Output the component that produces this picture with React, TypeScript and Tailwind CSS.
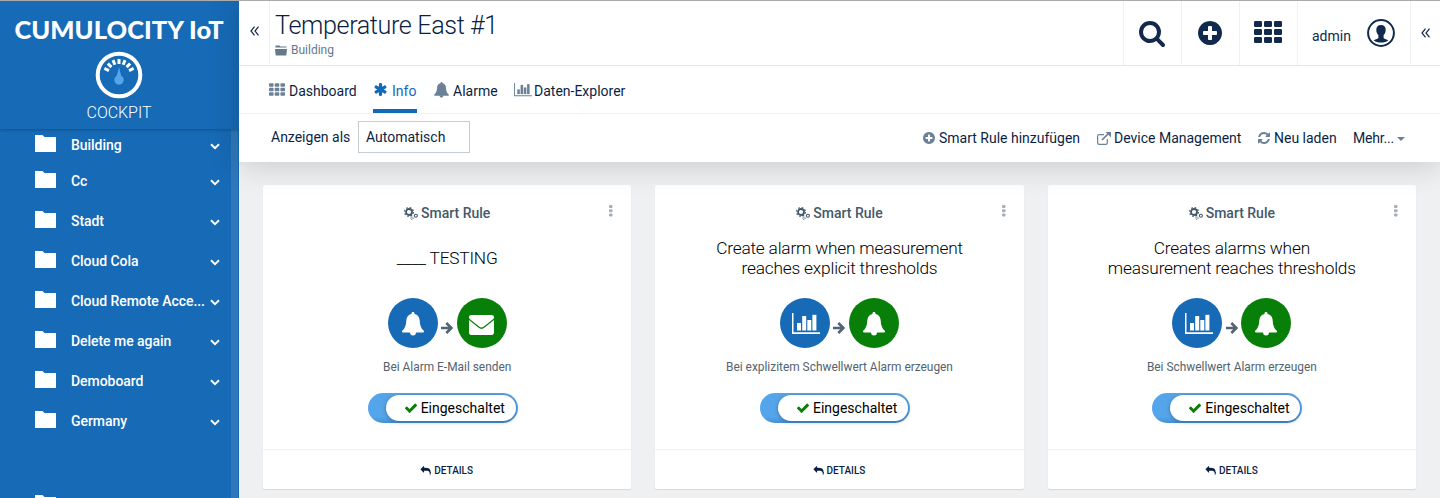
import React from "react";

const PATHS = {
  search: "M1216 832q0-185-131.5-316.5t-316.5-131.5-316.5 131.5-131.5 316.5 131.5 316.5 316.5 131.5 316.5-131.5 131.5-316.5zm512 832q0 52-38 90t-90 38q-54 0-90-38l-343-342q-179 124-399 124-143 0-273.5-55.5t-225-150-150-225-55.5-273.5 55.5-273.5 150-225 225-150 273.5-55.5 273.5 55.5 225 150 150 225 55.5 273.5q0 220-124 399l343 343q37 37 37 90z",
  plus: "M1344 960v-128q0-26-19-45t-45-19h-256v-256q0-26-19-45t-45-19h-128q-26 0-45 19t-19 45v256h-256q-26 0-45 19t-19 45v128q0 26 19 45t45 19h256v256q0 26 19 45t45 19h128q26 0 45-19t19-45v-256h256q26 0 45-19t19-45zm320-64q0 209-103 385.5t-279.5 279.5-385.5 103-385.5-103-279.5-279.5-103-385.5 103-385.5 279.5-279.5 385.5-103 385.5 103 279.5 279.5 103 385.5z",
  asterisk: "M1546 1050q46 26 59.5 77.5t-12.5 97.5l-64 110q-26 46-77.5 59.5t-97.5-12.5l-266-153v307q0 52-38 90t-90 38h-128q-52 0-90-38t-38-90v-307l-266 153q-46 26-97.5 12.5t-77.5-59.5l-64-110q-26-46-12.5-97.5t59.5-77.5l266-154-266-154q-46-26-59.5-77.5t12.5-97.5l64-110q26-46 77.5-59.5t97.5 12.5l266 153v-307q0-52 38-90t90-38h128q52 0 90 38t38 90v307l266-153q46-26 97.5-12.5t77.5 59.5l64 110q26 46 12.5 97.5t-59.5 77.5l-266 154z",
  check: "M1671 566q0 40-28 68l-724 724-136 136q-28 28-68 28t-68-28l-136-136-362-362q-28-28-28-68t28-68l136-136q28-28 68-28t68 28l294 295 656-657q28-28 68-28t68 28l136 136q28 28 28 68z",
  reply: "M1792 1120q0 166-127 451-3 7-10.5 24t-13.5 30-13 22q-12 17-28 17-15 0-23.5-10t-8.5-25q0-9 2.5-26.5t2.5-23.5q5-68 5-123 0-112-19.5-200.5t-54-153.5-89-112-117.5-78-149-43.5-171.5-18.5-200.5-5.5h-224v256q0 26-19 45t-45 19-45-19l-512-512q-19-19-19-45t19-45l512-512q19-19 45-19t45 19 19 45v256h224q713 0 875 403 53 134 53 333z",
  refresh: "M1639 1056q0 5-1 7-64 268-268 434.5t-478 166.5q-146 0-282.5-55t-243.5-157l-129 129q-19 19-45 19t-45-19-19-45v-448q0-26 19-45t45-19h448q26 0 45 19t19 45-19 45l-137 137q71 66 161 102t187 36q134 0 250-65t186-179q11-17 53-117 8-23 30-23h192q13 0 22.5 9.5t9.5 22.5zm25-800v448q0 26-19 45t-45 19h-448q-26 0-45-19t-19-45 19-45l138-138q-148-137-349-137-134 0-250 65t-186 179q-11 17-53 117-8 23-30 23h-199q-13 0-22.5-9.5t-9.5-22.5v-7q65-268 270-434.5t480-166.5q146 0 284 55.5t245 156.5l130-129q19-19 45-19t45 19 19 45z",
};

function Glyph({ name, className }: { name: keyof typeof PATHS; className: string }) {
  return (
    <svg viewBox="0 0 1792 1792" className={`shrink-0 overflow-visible ${className}`} fill="currentColor">
      <path d={PATHS[name]} />
    </svg>
  );
}

function Grid({ className }: { className: string }) {
  return (
    <svg viewBox="0 0 28 22" className={`shrink-0 ${className}`} fill="currentColor">
      {[0, 8, 16].map((y) =>
        [0, 10, 20].map((x) => <rect key={`${x}-${y}`} x={x} y={y} width="8" height="6" rx="1.2" />),
      )}
    </svg>
  );
}

function Bell({ className }: { className: string }) {
  return (
    <svg viewBox="0 0 22 24" className={`shrink-0 ${className}`} fill="currentColor">
      <path d="M11 0c.9 0 1.500.6 1.500 1.400v.5c3.300.7 5 3.300 5.200 6.600.3 5 1.300 7.900 4.100 10.300.5.500.2 1.700-.6 1.700H.8c-.8 0-1.100-1.200-.6-1.700C3 16.400 4 13.500 4.300 8.500c.2-3.300 1.900-5.900 5.200-6.600v-.5C9.500.6 10.100 0 11 0z" />
      <path d="M8 20h6a3 3.500 0 0 1-6 0z" />
    </svg>
  );
}

function BarChart({ className }: { className: string }) {
  return (
    <svg viewBox="0 0 28 22" className={`shrink-0 ${className}`} fill="currentColor">
      <path d="M0 0h1.500v19.300H28V21H0z" />
      <rect x="5" y="10" width="4" height="7.500" />
      <rect x="10.200" y="3" width="4" height="14.500" />
      <rect x="15.300" y="7" width="4" height="10.500" />
      <rect x="20.400" y="1.800" width="4" height="15.700" />
    </svg>
  );
}

function Envelope({ className }: { className: string }) {
  return (
    <svg viewBox="0 0 25 20" className={`shrink-0 ${className}`} fill="currentColor">
      <path d="M2.500 0h20C24 0 25 .9 25 2.200c0 .9-.5 1.600-1.300 2.200l-8.800 7c-1.700 1.300-3.100 1.300-4.800 0l-8.800-7C.5 3.800 0 3.100 0 2.200 0 .9 1 0 2.500 0z" />
      <path d="M0 5l9.300 7.600c2.300 1.700 4.100 1.700 6.400 0L25 5v12.800c0 1.200-1 2.200-2.200 2.200H2.200C1 20 0 19 0 17.800z" />
    </svg>
  );
}

function Folder({ className }: { className: string }) {
  return (
    <svg viewBox="0 0 21 17" className={`shrink-0 ${className}`} fill="currentColor">
      <path d="M0 0h7.500L9.500 2H21V17H0z" />
    </svg>
  );
}

function Cogs() {
  return (
    <svg viewBox="0 0 14 13" className="h-[13px] w-[14px] shrink-0" fill="none" stroke="currentColor">
      <circle cx="5" cy="5" r="3" strokeWidth="1.800" />
      <circle cx="5" cy="5" r="4.400" strokeWidth="1.200" strokeDasharray="1.730 1.730" />
      <circle cx="11.900" cy="8.700" r="1.500" strokeWidth="1.100" />
      <circle cx="7.900" cy="11.200" r="1.200" strokeWidth=".9" strokeDasharray="1 .5" />
    </svg>
  );
}

function Arrow() {
  return (
    <svg viewBox="0 0 12 12" className="mt-2.5 h-3 w-3 shrink-0 text-[#536473]" fill="none" stroke="currentColor" strokeWidth="2.600">
      <path d="M0 6h10M5.300 1l5 5-5 5" />
    </svg>
  );
}

function Gauge() {
  return (
    <svg viewBox="0 0 48 48" className="h-12 w-12">
      <circle cx="24" cy="24" r="21.300" fill="none" stroke="#fff" strokeWidth="4" />
      {[-66, -44, -22, 0, 22, 44, 66].map((a) => (
        <rect key={a} x="22.500" y="8" width="3" height="5" fill="#fff" transform={`rotate(${a} 24 24)`} />
      ))}
      <path d="M24 16l2.200 8.800a4.700 4.700 0 1 1-4.400 0z" fill="#55a5ea" />
    </svg>
  );
}

function DoubleChevron() {
  return (
    <svg viewBox="0 0 9 10" className="h-2.5 w-[9px]" fill="none" stroke="#14284b" strokeWidth="1.200">
      <path d="M4.500.7L1 5l3.500 4.300M8.500.7L5 5l3.500 4.300" />
    </svg>
  );
}

const FOLDERS = ["Building", "Cc", "Stadt", "Cloud Cola", "Cloud Remote Acce...", "Delete me again", "Demoboard", "Germany"];

function Sidebar() {
  return (
    <aside className="flex w-[239px] shrink-0 flex-col overflow-hidden bg-[#176ab6] text-white">
      <header className="z-10 flex h-[128px] shrink-0 flex-col items-center pr-px shadow-[0_1px_3px_rgba(0,0,0,0.25)]">
        <div className="mt-3 flex h-8 w-full justify-center whitespace-nowrap font-[Lato] text-[25.500px] leading-8 font-black tracking-[0.040px]">
          CUMULOCITY IoT
        </div>
        <div className="mt-1.5 h-12"><Gauge /></div>
        <div className="mt-1 text-base leading-5 font-light tracking-[-0.050px]">COCKPIT</div>
      </header>
      <div className="flex min-h-0 grow">
        <ul className="w-[231px]">
          {FOLDERS.map((f) => (
            <li key={f} className="flex h-10 items-center pl-[35px] text-sm font-medium tracking-[-0.050px] first:h-8">
              <Folder className="-mt-[3px] h-[17px] w-[21px]" />
              <span className="ml-[15px] w-[139px] shrink-0 whitespace-nowrap">{f}</span>
              <svg viewBox="0 0 10 7" className="mt-0.5 h-[7px] w-2.5 shrink-0" fill="none" stroke="#fff" strokeWidth="2">
                <path d="M1 1.200l4 4 4-4" />
              </svg>
            </li>
          ))}
          <li className="pt-[54px] pl-[35px]"><Folder className="h-[17px] w-[21px]" /></li>
        </ul>
        <div className="w-[7px] bg-[#2f78bc]" />
      </div>
    </aside>
  );
}

const CELL = "flex w-[57px] items-center justify-center border-l border-[#eff1f3] box-content";

function TopBar() {
  return (
    <header className="flex h-[65px] border-b border-[#e4e6e8]">
      <div className="flex w-[31px] items-center justify-center border-r border-[#eff1f3] pb-1"><DoubleChevron /></div>
      <div className="grow pl-[5px]">
        <h1 className="mt-[9px] h-[31px] text-[25.200px] leading-8 font-light tracking-[-0.400px]">Temperature East #1</h1>
        <div className="flex items-center text-xs leading-[18px] text-[#64798c]">
          <svg viewBox="0 0 12 11" className="mr-1 h-[11px] w-3" fill="currentColor">
            <path d="M.5.500h4l1 1h6v1H.500zM0 4h12l-.7 6.500H.7z" />
          </svg>
          Building
        </div>
      </div>
      <div className="flex text-[#10294d]">
        <div className={CELL}><Glyph name="search" className="mr-0.5 h-7 w-7" /></div>
        <div className={CELL}><Glyph name="plus" className="mr-0.5 h-7 w-7" /></div>
        <div className={CELL}><Grid className="mr-0.5 mb-0.5 h-[22px] w-7" /></div>
        <div className="flex w-[113px] items-center border-l border-[#eff1f3] pl-3.5 text-sm">
          <span className="mt-1.5 w-[55px]">admin</span>
          <svg viewBox="0 0 28 28" className="h-7 w-7">
            <circle cx="14" cy="14" r="12.900" fill="none" stroke="currentColor" strokeWidth="2" />
            <path d="M14 6c3 0 4.700 1.800 4.700 5 0 2.600-1 4-2.100 5v3c1 1.300 3.500 1.300 4.600 2.500-2 1.500-4.300 2-7.200 2s-5.200-.5-7.200-2c1.100-1.200 3.600-1.200 4.600-2.500v-3c-1.100-1-2.100-2.400-2.100-5 0-3.200 1.700-5 4.700-5z" fill="currentColor" />
          </svg>
        </div>
        <div className="flex w-[30px] items-center justify-center border-l border-[#eff1f3]"><DoubleChevron /></div>
      </div>
    </header>
  );
}

function Tabs() {
  return (
    <nav className="flex h-12 items-center border-b border-[#eff1f3] pl-[30px] text-sm">
      <div className="flex h-full w-[104px] items-center"><Grid className="mr-1 h-[13px] w-4 text-[#6b8197]" /><span className="mt-[3px]">Dashboard</span></div>
      <div className="flex h-full w-[44px] items-center border-b-4 border-[#1269b9] pt-1 text-[#1269b9]">
        <Glyph name="asterisk" className="mr-1 h-[15px] w-[15px]" /><span className="mt-[3px]">Info</span>
      </div>
      <div className="ml-[17px] flex h-full w-20 items-center"><Bell className="mr-1 h-4 w-[15px] text-[#6b8197]" /><span className="mt-[3px]">Alarme</span></div>
      <div className="flex h-full items-center"><BarChart className="mr-[2px] h-3.5 w-[18px] text-[#6b8197]" /><span className="mt-[3px]">Daten-Explorer</span></div>
    </nav>
  );
}

function ActionBar() {
  return (
    <div className="flex h-12 items-center pr-[35px] pl-8 text-sm">
      <span className="-mt-0.5 w-[87px]">Anzeigen als</span>
      <div className="-mt-0.5 flex h-8 w-[112px] items-center border border-[#c5ccd2] pl-[7px]">Automatisch</div>
      <div className="grow" />
      <div className="flex items-center whitespace-nowrap">
        <Glyph name="plus" className="mr-[3px] h-3.5 w-3.5 text-[#6b8197]" />
        <span className="w-[158px]">Smart Rule hinzufügen</span>
        <svg viewBox="0 0 14 13" className="mr-[3px] h-[13px] w-3.5 text-[#6b8197]" fill="none" stroke="currentColor" strokeWidth="1.200">
          <path d="M7 2.600H2.200a1.600 1.600 0 0 0-1.600 1.600v6.500a1.600 1.600 0 0 0 1.600 1.600h6.500a1.600 1.600 0 0 0 1.600-1.600V7" />
          <path d="M5 8l6.500-6.500" strokeWidth="1.700" />
          <path d="M8.500 0H14v5.500z" fill="currentColor" stroke="none" />
        </svg>
        <span className="w-[143px]">Device Management</span>
        <Glyph name="refresh" className="mr-[3px] h-3.5 w-3.5 text-[#6b8197]" />
        <span className="w-[79px]">Neu laden</span>
        <span className="w-11 tracking-[-0.200px]">Mehr...</span>
        <svg viewBox="0 0 8 4" className="mt-0.5 h-1 w-2" fill="#6b8197"><path d="M0 0h8L4 4z" /></svg>
      </div>
    </div>
  );
}

function Circle({ kind, color }: { kind: "bell" | "chart" | "mail"; color: string }) {
  return (
    <div className={`flex h-[50px] w-[50px] items-center justify-center rounded-full text-white ${color}`}>
      {kind === "bell" && <Bell className="mt-0.5 h-6 w-[22px]" />}
      {kind === "chart" && <BarChart className="mt-0.5 ml-[3px] h-[22px] w-7" />}
      {kind === "mail" && <Envelope className="mt-1 h-5 w-[25px]" />}
    </div>
  );
}

type Rule = { title: string[]; from: "bell" | "chart"; to: "bell" | "mail"; text: string };

const RULES: Rule[] = [
  { title: ["____ TESTING"], from: "bell", to: "mail", text: "Bei Alarm E-Mail senden" },
  { title: ["Create alarm when measurement", "reaches explicit thresholds"], from: "chart", to: "bell", text: "Bei explizitem Schwellwert Alarm erzeugen" },
  { title: ["Creates alarms when", "measurement reaches thresholds"], from: "chart", to: "bell", text: "Bei Schwellwert Alarm erzeugen" },
];

function Card({ rule }: { rule: Rule }) {
  return (
    <article className="relative flex h-[304px] flex-col items-center rounded-xs bg-white shadow-[0_1px_1px_rgba(0,0,0,0.1)]">
      <svg viewBox="0 0 4 12" className="absolute top-5 right-[18px] h-3 w-1" fill="#a3b0bb">
        <rect width="3.500" height="3" rx="1" /><rect y="4.200" width="3.500" height="3" rx="1" /><rect y="8.400" width="3.500" height="3" rx="1" />
      </svg>
      <div className="mt-[18px] flex h-5 items-center gap-[3px] text-sm font-medium text-[#44586a]"><Cogs />Smart Rule</div>
      <h2 className="mt-[15px] mb-px flex h-10 flex-col justify-center text-center text-[17.300px] leading-5 font-light tracking-[-0.200px] text-black">
        {rule.title.map((t) => <span key={t}>{t}</span>)}
      </h2>
      <div className="mt-[19px] flex items-center">
        <Circle kind={rule.from} color="bg-[#176ab6]" />
        <div className="flex w-[19px] justify-center"><Arrow /></div>
        <Circle kind={rule.to} color="bg-[#087f08]" />
      </div>
      <p className="mt-[10px] text-[11.900px] leading-[18px] text-[#53636f]">{rule.text}</p>
      <div className="mt-[17px] mr-[9px] flex h-[30px] w-[150px] justify-end rounded-full bg-gradient-to-b from-[#55a5ea] from-80% to-[#438fd5] p-0.5">
        <div className="flex w-[130px] items-center rounded-full bg-white pl-[18px] text-sm text-black shadow-[0_1px_4px_rgba(0,0,0,0.3)]">
          <Glyph name="check" className="mr-[3px] h-3.5 w-3.5 text-[#087f08]" />Eingeschaltet
        </div>
      </div>
      <footer className="mt-auto flex h-10 w-full items-center justify-center gap-[3px] border-t border-[#eff0f2] pt-0.5 text-[10px] font-medium">
        <Glyph name="reply" className="h-2.5 w-2.5" />DETAILS
      </footer>
    </article>
  );
}

export default function App() {
  return (
    <div className="flex h-[498px] w-[1440px] overflow-hidden border-t border-[#aaaaaa] bg-[#eef0f2] font-[Roboto,sans-serif] text-[#0b1f45]">
      <Sidebar />
      <main className="flex min-w-0 grow flex-col">
        <div className="z-10 bg-white shadow-[0_2px_30px_rgba(0,0,0,0.18)]">
          <TopBar />
          <Tabs />
          <ActionBar />
        </div>
        <div className="grid grid-cols-3 gap-6 px-6 pt-[23px]">
          {RULES.map((r) => <Card key={r.text} rule={r} />)}
        </div>
      </main>
    </div>
  );
}
